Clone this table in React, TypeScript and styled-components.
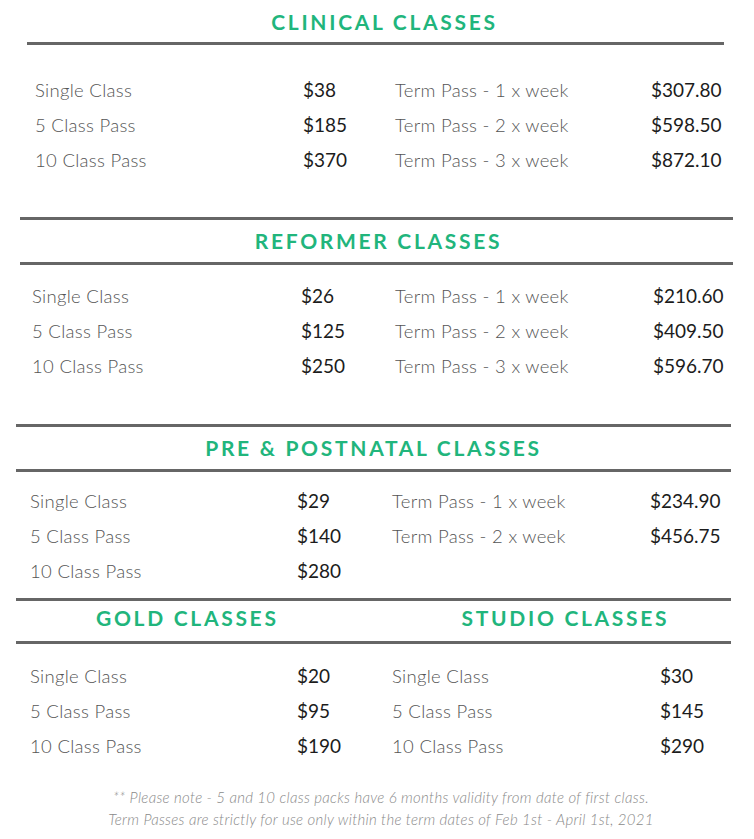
import * as React from 'react'
import styled, { createGlobalStyle } from 'styled-components'

interface Row {
  label: string
  price: string
  termLabel?: string
  termPrice?: string
}

interface ISection {
  title: string
  rows: Row[]
  left: number
  right: number
  topRule?: boolean
  gapTop: number
  rowsTop: number
  titleShift?: number
}

const GlobalStyle = createGlobalStyle`
  body {
    margin: 0;
    background: #ffffff;
    font-family: Lato, "Liberation Sans", sans-serif;
  }
`

const Page = styled.div`
  width: 754px;
  height: 839px;
  overflow: hidden;
  background: #ffffff;
  padding-top: 8px;
  box-sizing: border-box;
`

const SectionWrap = styled.section<{ $left: number; $right: number; $gapTop: number }>`
  margin: ${p => p.$gapTop}px ${p => p.$right}px 0 ${p => p.$left}px;
`

const Rule = styled.div`
  height: 3px;
  background: #666666;
`

const Title = styled.h2<{ $shift?: number }>`
  margin: 0;
  height: 28px;
  line-height: 28px;
  text-align: center;
  padding-left: ${p => p.$shift ?? 0}px;
  color: #21b57c;
  font-family: Lato, "Liberation Sans", sans-serif;
  font-weight: 700;
  font-size: 21px;
  letter-spacing: 2.7px;
`

const TitleGap = styled.div<{ $h: number }>`
  height: ${p => p.$h}px;
`

const Rows = styled.div<{ $top: number; $inset: number; $cols: string }>`
  display: grid;
  grid-template-columns: ${p => p.$cols};
  grid-auto-rows: 35px;
  align-items: center;
  padding: ${p => p.$top}px 0 0 ${p => p.$inset}px;
`

const Label = styled.div`
  font-family: Lato, "Liberation Sans", sans-serif;
  font-weight: 300;
  font-size: 18.5px;
  color: #555555;
  letter-spacing: 0.3px;
  white-space: nowrap;
`

const Price = styled.div`
  font-family: Lato, "Liberation Sans", sans-serif;
  font-weight: 400;
  font-size: 19px;
  color: #1c1c1c;
  white-space: nowrap;
`

const SplitTitles = styled.div`
  display: grid;
  grid-template-columns: 1fr 1fr;
  padding-top: 3px;
`

const SplitTitle = styled(Title)`
  text-align: left;
`

const Note = styled.p`
  margin: 23px 0 0;
  text-align: center;
  font-family: Lato, "Liberation Sans", sans-serif;
  font-style: italic;
  font-weight: 300;
  font-size: 15px;
  letter-spacing: 0.3px;
  line-height: 22px;
  color: #8a8a8a;
  white-space: nowrap;
  padding-left: 8px;
`

const Section: React.FC<ISection & { cols: string; inset: number }> = ({
  title, rows, left, right, topRule, gapTop, rowsTop, cols, inset, titleShift,
}) => (
  <SectionWrap $left={left} $right={right} $gapTop={gapTop}>
    {topRule && <Rule />}
    {topRule && <TitleGap $h={7} />}
    <Title $shift={titleShift}>{title}</Title>
    <TitleGap $h={topRule ? 7 : 6} />
    <Rule />
    <Rows $top={rowsTop} $inset={inset} $cols={cols}>
      {rows.map(r => (
        <React.Fragment key={r.label}>
          <Label>{r.label}</Label>
          <Price>{r.price}</Price>
          <Label>{r.termLabel ?? ''}</Label>
          <Price>{r.termPrice ?? ''}</Price>
        </React.Fragment>
      ))}
    </Rows>
  </SectionWrap>
)

const clinical: Row[] = [
  { label: 'Single Class', price: '$38', termLabel: 'Term Pass - 1 x week', termPrice: '$307.80' },
  { label: '5 Class Pass', price: '$185', termLabel: 'Term Pass - 2 x week', termPrice: '$598.50' },
  { label: '10 Class Pass', price: '$370', termLabel: 'Term Pass - 3 x week', termPrice: '$872.10' },
]

const reformer: Row[] = [
  { label: 'Single Class', price: '$26', termLabel: 'Term Pass - 1 x week', termPrice: '$210.60' },
  { label: '5 Class Pass', price: '$125', termLabel: 'Term Pass - 2 x week', termPrice: '$409.50' },
  { label: '10 Class Pass', price: '$250', termLabel: 'Term Pass - 3 x week', termPrice: '$596.70' },
]

const natal: Row[] = [
  { label: 'Single Class', price: '$29', termLabel: 'Term Pass - 1 x week', termPrice: '$234.90' },
  { label: '5 Class Pass', price: '$140', termLabel: 'Term Pass - 2 x week', termPrice: '$456.75' },
  { label: '10 Class Pass', price: '$280' },
]

const goldStudio: Row[] = [
  { label: 'Single Class', price: '$20', termLabel: 'Single Class', termPrice: '$30' },
  { label: '5 Class Pass', price: '$95', termLabel: '5 Class Pass', termPrice: '$145' },
  { label: '10 Class Pass', price: '$190', termLabel: '10 Class Pass', termPrice: '$290' },
]

export default function App() {
  return (
    <Page>
      <GlobalStyle />
      <Section
        title="CLINICAL CLASSES" rows={clinical} left={27} right={30} titleShift={18}
        gapTop={0} rowsTop={27} inset={8} cols="268px 92px 256px auto"
      />
      <Section
        title="REFORMER CLASSES" rows={reformer} left={20} right={21} topRule titleShift={4}
        gapTop={40} rowsTop={13} inset={12} cols="269px 94px 258px auto"
      />
      <Section
        title="PRE & POSTNATAL CLASSES" rows={natal} left={16} right={23} topRule
        gapTop={41} rowsTop={11} inset={14} cols="267px 95px 258px auto"
      />
      <SectionWrap $left={16} $right={23} $gapTop={10}>
        <Rule />
        <SplitTitles>
          <SplitTitle $shift={80}>GOLD CLASSES</SplitTitle>
          <SplitTitle $shift={88}>STUDIO CLASSES</SplitTitle>
        </SplitTitles>
        <TitleGap $h={9} />
        <Rule />
        <Rows $top={14} $inset={14} $cols="267px 95px 268px auto">
          {goldStudio.map(r => (
            <React.Fragment key={r.label}>
              <Label>{r.label}</Label>
              <Price>{r.price}</Price>
              <Label>{r.termLabel}</Label>
              <Price>{r.termPrice}</Price>
            </React.Fragment>
          ))}
        </Rows>
      </SectionWrap>
      <Note>
        ** Please note - 5 and 10 class packs have 6 months validity from date of first class.
        <br />
        Term Passes are strictly for use only within the term dates of Feb 1st - April 1st, 2021
      </Note>
    </Page>
  )
}
